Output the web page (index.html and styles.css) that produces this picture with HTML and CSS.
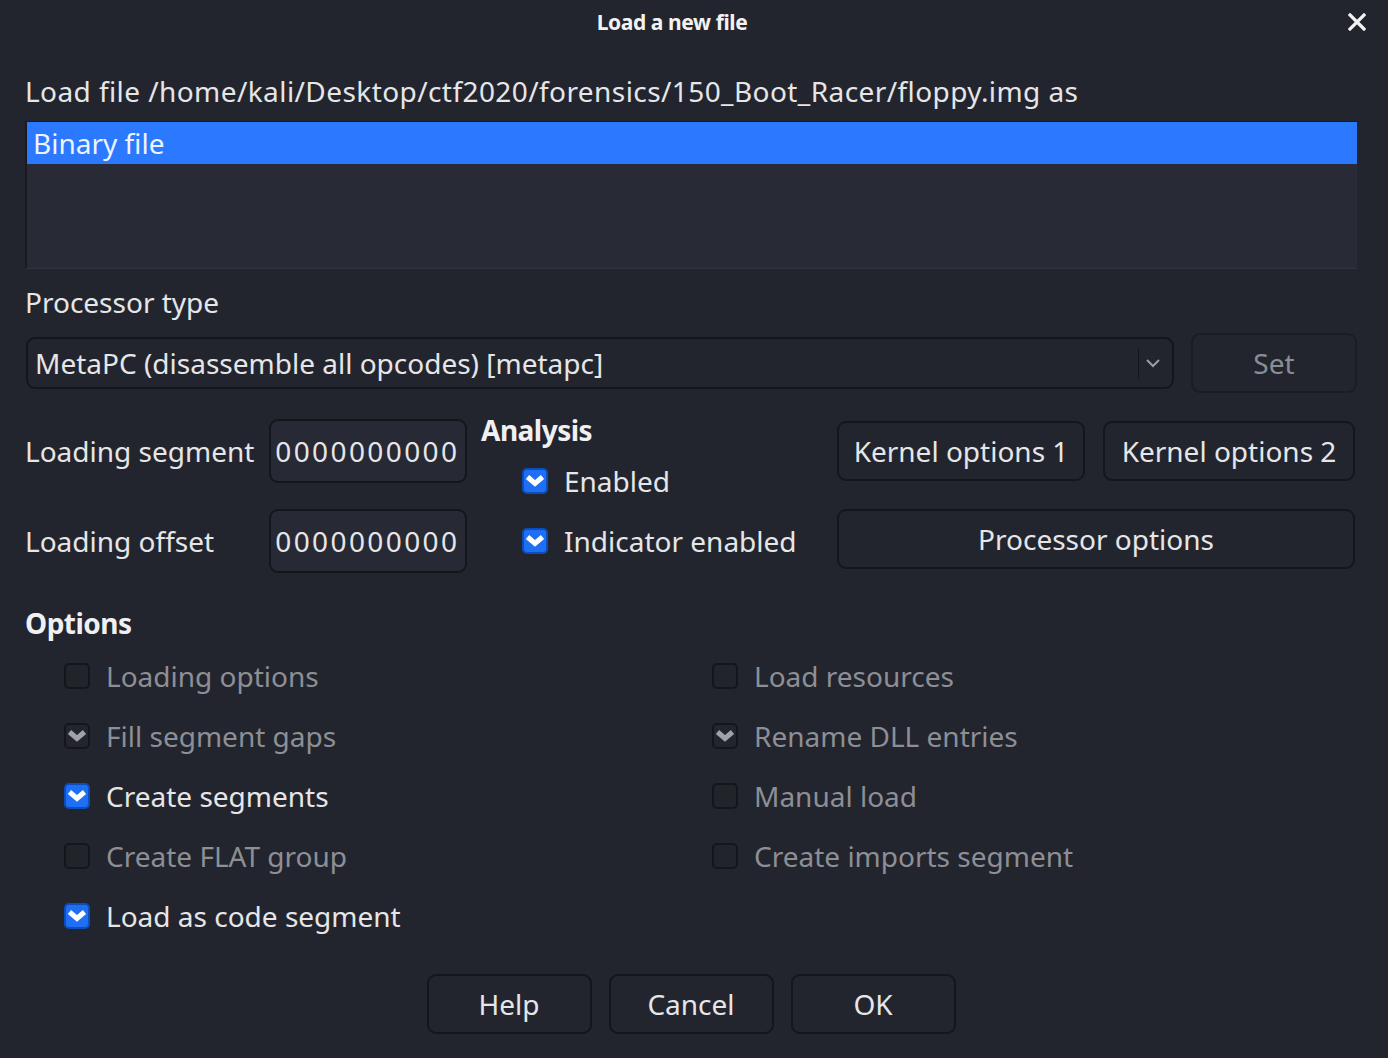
FILE: index.html
```html
<!DOCTYPE html>
<html>
<head>
<meta charset="utf-8">
<link rel="stylesheet" href="styles.css">
</head>
<body>
<div class="dialog">
  <header class="titlebar">
    <div class="title">Load a new file</div>
    <button class="close" aria-label="Close">
      <svg width="18" height="18" viewBox="0 0 18 18"><path d="M2 2 L16 16 M16 2 L2 16" stroke="#f2f2f2" stroke-width="3.2" stroke-linecap="square"/></svg>
    </button>
  </header>

  <main class="content">
    <div class="label load-label">Load file /home/kali/Desktop/ctf2020/forensics/150_Boot_Racer/floppy.img as</div>
    <div class="listbox">
      <div class="list-item selected">Binary file</div>
    </div>

    <div class="label proc-label">Processor type</div>
    <div class="combo-row">
      <div class="combo">
        <span class="combo-text">MetaPC (disassemble all opcodes) [metapc]</span>
        <span class="combo-sep"></span>
        <svg class="combo-arrow" width="16" height="10" viewBox="0 0 16 10"><path d="M2 2 L8 8 L14 2" fill="none" stroke="#9a9ca4" stroke-width="2"/></svg>
      </div>
      <button class="btn set-btn" disabled>Set</button>
    </div>

    <div class="middle">
      <div class="fields">
        <div class="label field-label">Loading segment</div>
        <div class="input"><span>0000000000</span></div>
        <div class="label field-label">Loading offset</div>
        <div class="input"><span>0000000000</span></div>
      </div>
      <div class="analysis">
        <div class="heading">Analysis</div>
        <label class="check-row">
          <span class="cb checked"><svg viewBox="0 0 22 22"><polyline points="3.5,7 11,13.5 18.5,7" fill="none" stroke="#fff" stroke-width="5"/></svg></span>
          <span class="check-text">Enabled</span>
        </label>
        <label class="check-row">
          <span class="cb checked"><svg viewBox="0 0 22 22"><polyline points="3.5,7 11,13.5 18.5,7" fill="none" stroke="#fff" stroke-width="5"/></svg></span>
          <span class="check-text">Indicator enabled</span>
        </label>
      </div>
      <div class="opt-buttons">
        <button class="btn k1">Kernel options 1</button>
        <button class="btn k2">Kernel options 2</button>
        <button class="btn proc">Processor options</button>
      </div>
    </div>

    <div class="heading options-heading">Options</div>
    <div class="options-grid">
      <label class="check-row disabled">
        <span class="cb"></span><span class="check-text">Loading options</span>
      </label>
      <label class="check-row disabled">
        <span class="cb"></span><span class="check-text">Load resources</span>
      </label>
      <label class="check-row disabled">
        <span class="cb dis-checked"><svg viewBox="0 0 22 22"><polyline points="3.5,7 11,13.5 18.5,7" fill="none" stroke="#a0a2a7" stroke-width="5"/></svg></span><span class="check-text">Fill segment gaps</span>
      </label>
      <label class="check-row disabled">
        <span class="cb dis-checked"><svg viewBox="0 0 22 22"><polyline points="3.5,7 11,13.5 18.5,7" fill="none" stroke="#a0a2a7" stroke-width="5"/></svg></span><span class="check-text">Rename DLL entries</span>
      </label>
      <label class="check-row">
        <span class="cb checked"><svg viewBox="0 0 22 22"><polyline points="3.5,7 11,13.5 18.5,7" fill="none" stroke="#fff" stroke-width="5"/></svg></span><span class="check-text">Create segments</span>
      </label>
      <label class="check-row disabled">
        <span class="cb"></span><span class="check-text">Manual load</span>
      </label>
      <label class="check-row disabled">
        <span class="cb"></span><span class="check-text">Create FLAT group</span>
      </label>
      <label class="check-row disabled">
        <span class="cb"></span><span class="check-text">Create imports segment</span>
      </label>
      <label class="check-row">
        <span class="cb checked"><svg viewBox="0 0 22 22"><polyline points="3.5,7 11,13.5 18.5,7" fill="none" stroke="#fff" stroke-width="5"/></svg></span><span class="check-text">Load as code segment</span>
      </label>
    </div>

    <div class="footer">
      <button class="btn foot">Help</button>
      <button class="btn foot">Cancel</button>
      <button class="btn foot ok">OK</button>
    </div>
  </main>
</div>
</body>
</html>
```

FILE: styles.css
```css
* { box-sizing: border-box; }
html, body {
  margin: 0;
  padding: 0;
  background: #23252e;
}
body {
  width: 1388px;
  height: 1058px;
  overflow: hidden;
  font-family: "Noto Sans", "Open Sans", sans-serif;
  font-size: 28px;
  color: #e6e6e8;
}
.dialog {
  width: 1388px;
  height: 1058px;
  display: flex;
  flex-direction: column;
}
.titlebar {
  height: 44px;
  display: flex;
  align-items: center;
  padding-right: 18px;
}
.title {
  flex: 1;
  text-align: center;
  font-weight: bold;
  font-size: 21px;
  color: #f2f2f2;
  letter-spacing: -0.4px;
}
.close {
  width: 26px;
  height: 26px;
  padding: 0;
  border: none;
  background: transparent;
  display: flex;
  align-items: center;
  justify-content: center;
}
.content {
  padding: 0 31px 0 25px;
  display: flex;
  flex-direction: column;
}
.label {
  line-height: 36px;
  white-space: nowrap;
}
.load-label {
  margin-top: 29px;
  letter-spacing: 0.42px;
}
.listbox {
  margin-top: 12px;
  height: 148px;
  background: #282a36;
  border-left: 2px solid #191a20;
  border-top: 1px solid #191a20;
  border-bottom: 1px solid #30323e;
}
.list-item {
  height: 42px;
  line-height: 42px;
  padding-left: 6px;
}
.list-item.selected {
  background: #2a79ff;
  color: #eef3ff;
}
.proc-label {
  margin-top: 15px;
}
.combo-row {
  margin-top: 13px;
  display: flex;
  align-items: center;
  gap: 17px;
  height: 60px;
}
.combo {
  flex: 1;
  margin-left: 1px;
  height: 52px;
  border: 2px solid #15161b;
  border-radius: 9px;
  background: #23252e;
  display: flex;
  align-items: center;
  padding-left: 7px;
}
.combo-text {
  flex: 1;
  white-space: nowrap;
}
.combo-sep {
  width: 1px;
  height: 31px;
  background: #15161b;
}
.combo-arrow {
  margin: 0 11px 0 6px;
}
.btn {
  font-family: inherit;
  font-size: 28px;
  color: #e6e6e8;
  background: #23252e;
  border: 2px solid #15161b;
  border-radius: 9px;
  height: 60px;
  padding: 0;
  white-space: nowrap;
}
.set-btn {
  width: 166px;
  color: #8b8d93;
  border-color: #1c1d24;
}
.middle {
  margin-top: 16px;
  display: flex;
  align-items: flex-start;
}
.fields {
  margin-top: 10px;
  display: grid;
  grid-template-columns: 244px 198px;
  grid-template-rows: 64px 64px;
  row-gap: 26px;
  align-items: center;
}
.input {
  height: 64px;
  border: 2px solid #15161b;
  border-radius: 9px;
  background: #272935;
  display: flex;
  align-items: center;
  justify-content: flex-end;
  padding: 0 8px 0 2px;
  white-space: nowrap;
}
.input span {
  letter-spacing: 2.4px;
  margin-right: -2.4px;
}
.analysis {
  margin-left: 14px;
  width: 356px;
  display: flex;
  flex-direction: column;
}
.heading {
  font-weight: bold;
  font-size: 28px;
  line-height: 42px;
  letter-spacing: -0.5px;
  color: #f0f0f2;
}
.analysis .check-row {
  margin-left: 41px;
}
.check-row {
  height: 60px;
  display: flex;
  align-items: center;
  gap: 16px;
  white-space: nowrap;
}
.cb {
  width: 26px;
  height: 26px;
  border-radius: 5px;
  border: 2px solid #15161b;
  background: #22242c;
  flex: none;
  display: flex;
  align-items: center;
  justify-content: center;
  overflow: hidden;
}
.cb svg {
  width: 22px;
  height: 22px;
  flex: none;
}
.cb.checked {
  background: #1f6ff5;
  border-color: #0c4dbd;
}
.cb.dis-checked {
  background: #23252e;
}
.disabled .check-text {
  color: #8d8f95;
}
.opt-buttons {
  margin-top: 12px;
  width: 518px;
  display: grid;
  grid-template-columns: 248px 252px;
  column-gap: 18px;
  row-gap: 28px;
}
.proc {
  grid-column: 1 / span 2;
}
.options-heading {
  margin-top: 27px;
  line-height: 46px;
}
.options-grid {
  margin-left: 39px;
  display: grid;
  grid-template-columns: 648px 1fr;
  grid-auto-rows: 60px;
}
.footer {
  margin-top: 28px;
  display: flex;
  justify-content: center;
  gap: 17px;
}
.btn.foot {
  width: 165px;
}
```
